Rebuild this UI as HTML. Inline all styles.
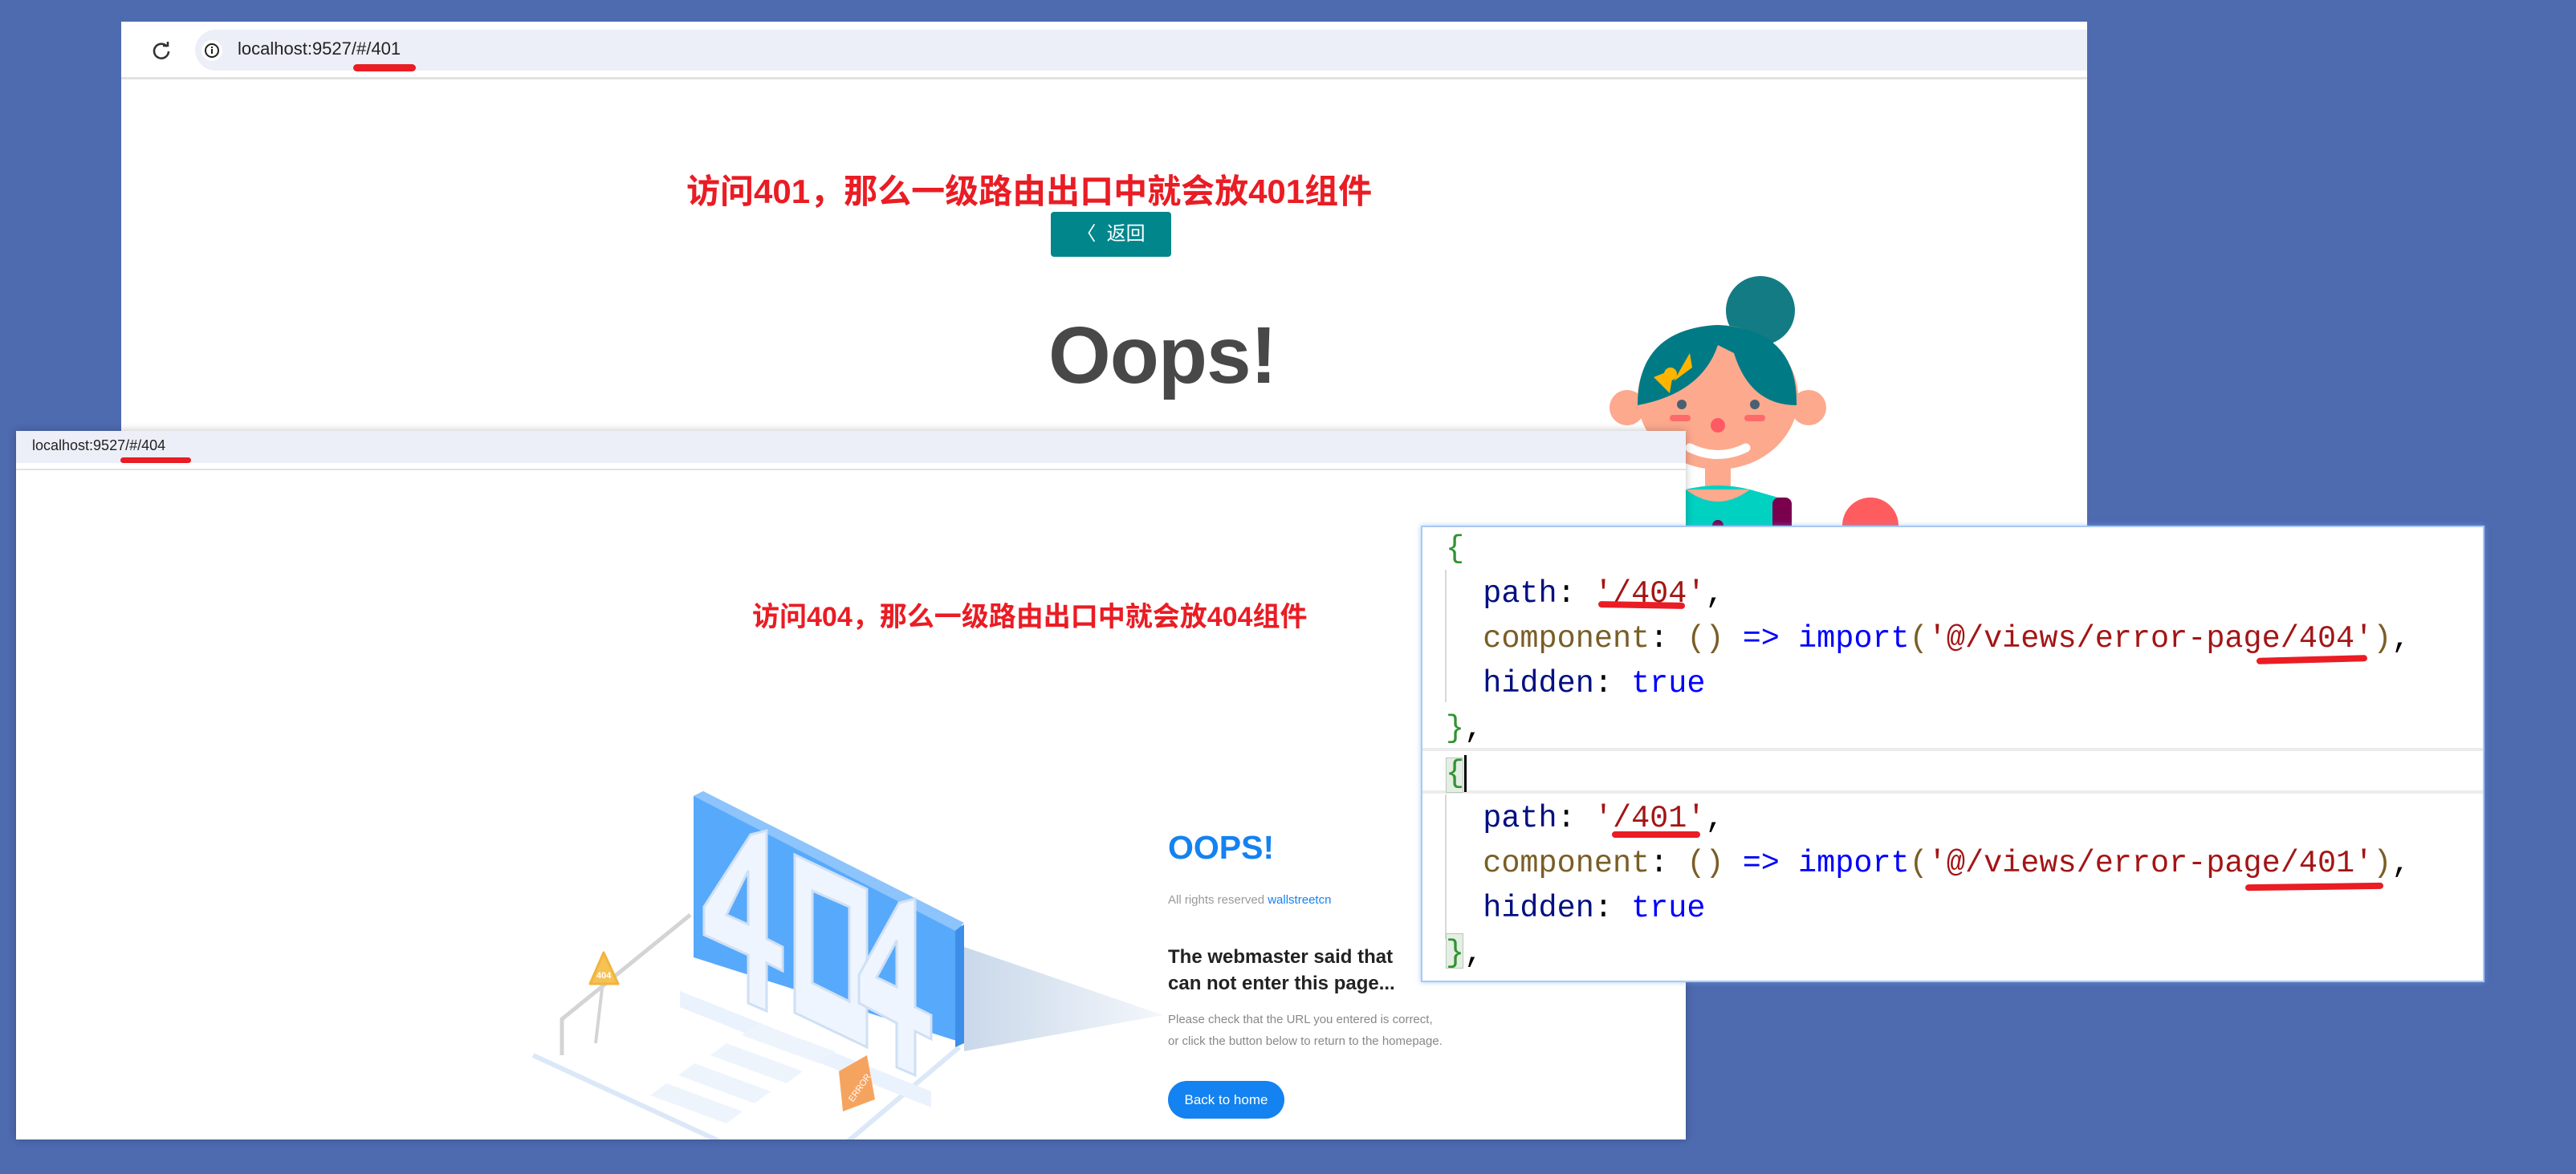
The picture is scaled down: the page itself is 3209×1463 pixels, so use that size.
<!DOCTYPE html>
<html><head><meta charset="utf-8"><style>
*{margin:0;padding:0;box-sizing:border-box}
body{width:3209px;height:1463px;background:#4e6bb0;position:relative;overflow:hidden;font-family:"Liberation Sans","Noto Sans CJK SC",sans-serif}
.abs{position:absolute}
.cn{font-family:"Liberation Sans","Noto Sans CJK SC",sans-serif;font-weight:bold;color:#ea1c24;white-space:nowrap}
.code{font-family:"Liberation Mono",monospace;font-size:38.5px;white-space:pre;line-height:56px}
</style></head><body>

<!-- window 1 -->
<div class="abs" style="left:151px;top:27px;width:2449px;height:640px;background:#fff"></div>
<div class="abs" style="left:243px;top:37px;width:2357px;height:51px;background:#eceff7;border-radius:26px 0 0 26px"></div>
<div class="abs" style="left:151px;top:96px;width:2449px;height:3px;background:#e2e2e2"></div>
<svg class="abs" style="left:188px;top:50px" width="26" height="26" viewBox="0 0 26 26"><path d="M20 8 A9 9 0 1 0 22 14" fill="none" stroke="#333" stroke-width="2.6"/><path d="M15 7 L21 7 L21 2" fill="none" stroke="#333" stroke-width="2.6"/></svg>
<div class="abs" style="left:251px;top:50px;width:26px;height:26px;border-radius:50%;background:#fff"></div>
<svg class="abs" style="left:254px;top:53px" width="20" height="20" viewBox="0 0 20 20"><circle cx="10" cy="10" r="8" fill="none" stroke="#222" stroke-width="2"/><rect x="9" y="8" width="2" height="6" fill="#222"/><rect x="9" y="5" width="2" height="2" fill="#222"/></svg>
<div class="abs" style="left:296px;top:48px;font-size:22px;color:#222">localhost:9527/#/401</div>
<div class="abs" style="left:440px;top:80px;width:78px;height:9px;background:#ea1c24;border-radius:5px"></div>

<div class="abs cn" style="left:855px;top:205px;font-size:42px">访问401，那么一级路由出口中就会放401组件</div>
<div class="abs" style="left:1309px;top:264px;width:150px;height:56px;background:#00868b;border-radius:4px;color:#fff;font-size:24px;line-height:56px;text-align:center">〈&nbsp;&nbsp;返回</div>
<div class="abs" style="left:1306px;top:386px;font-size:100px;font-weight:bold;color:#484848;letter-spacing:-1px">Oops!</div>

<!-- girl -->
<svg class="abs" style="left:2000px;top:340px" width="400" height="330" viewBox="2000 340 400 330">
<circle cx="2193" cy="387" r="43" fill="#137b84"/>
<circle cx="2027" cy="508" r="22" fill="#fca98e"/><circle cx="2253" cy="508" r="22" fill="#fca98e"/>
<rect x="2124" y="565" width="32" height="45" fill="#fca98e"/>
<path d="M2100 610 Q2140 600 2180 610 L2215 620 L2215 670 L2100 670Z" fill="#00d1c1"/>
<path d="M2100 610 Q2140 640 2180 610Z" fill="#fca98e"/>
<rect x="2208" y="620" width="24" height="50" rx="8" fill="#7a004e"/>
<circle cx="2140" cy="655" r="7" fill="#7a004e"/>
<ellipse cx="2140" cy="495" rx="100" ry="90" fill="#fca98e"/>
<path d="M2040 505 Q2040 410 2140 405 Q2240 410 2238 505 Q2180 505 2160 440 L2140 430 Q2120 490 2040 505Z" fill="#007a85"/>
<path d="M2060 470 L2080 490 L2085 460 Z M2085 475 L2105 440 L2108 458Z" fill="#ffb400"/><circle cx="2081" cy="466" r="8" fill="#ffb400"/>
<circle cx="2095" cy="504" r="6" fill="#4a6070"/><circle cx="2186" cy="504" r="6" fill="#4a6070"/>
<rect x="2080" y="517" width="26" height="8" rx="4" fill="#fc6a6a"/><rect x="2173" y="517" width="26" height="8" rx="4" fill="#fc6a6a"/>
<circle cx="2140" cy="530" r="9" fill="#ff5a64"/>
<path d="M2105 558 Q2140 575 2175 558" fill="none" stroke="#fff" stroke-width="11" stroke-linecap="round"/>
<circle cx="2330" cy="655" r="35" fill="#ff5c60"/>
</svg>

<!-- window 2 -->
<div class="abs" style="left:20px;top:537px;width:2080px;height:883px;background:#fff;box-shadow:0 0 10px rgba(0,0,0,.25)"></div>
<div class="abs" style="left:20px;top:537px;width:2080px;height:40px;background:#eceff7"></div>
<div class="abs" style="left:20px;top:584px;width:2080px;height:2px;background:#e2e2e2"></div>
<div class="abs" style="left:40px;top:545px;font-size:18px;color:#222">localhost:9527/#/404</div>
<div class="abs" style="left:150px;top:570px;width:88px;height:7px;background:#ea1c24;border-radius:4px"></div>
<div class="abs cn" style="left:937px;top:741px;font-size:34px">访问404，那么一级路由出口中就会放404组件</div>

<svg class="abs" style="left:660px;top:985px" width="800" height="435" viewBox="660 985 800 435">
<defs><linearGradient id="sh" x1="0" x2="1"><stop offset="0" stop-color="#c9d8ea"/><stop offset="1" stop-color="#f4f7fb"/></linearGradient></defs>
<path d="M1201 1180 L1449 1265 L1201 1310Z" fill="url(#sh)"/>
<path d="M664 1315 L1000 1470 L1195 1305" fill="none" stroke="#dbe8f8" stroke-width="6"/>
<path d="M700 1315 L700 1270 L860 1140" fill="none" stroke="#d4d4d4" stroke-width="5"/>
<path d="M742 1300 L752 1215" fill="none" stroke="#d4d4d4" stroke-width="4"/>
<path d="M847 1235 L1160 1360 L1160 1380 L847 1255Z" fill="#eaf2fd"/>
<path d="M944 1275 L1040 1310 L1020 1325 L924 1290Z M905 1300 L1000 1335 L980 1350 L885 1315Z M865 1325 L960 1360 L940 1375 L845 1340Z M830 1350 L925 1385 L905 1400 L810 1365Z" fill="#eef4fc"/>
<path d="M864 992 L876 986 L1201 1155 L1201 1300 L864 1193Z" fill="#57a9fb"/>
<path d="M864 992 L876 986 L1201 1150 L1190 1160Z" fill="#8cc4fb"/>
<path d="M1190 1160 L1201 1152 L1201 1300 L1190 1305Z" fill="#3d8ee8"/>
<g fill="#eef5fe" stroke="#cfe0f5" stroke-width="3">
<path d="M935 1040 L955 1035 L955 1170 L975 1180 L975 1210 L955 1200 L955 1260 L932 1250 L932 1190 L877 1165 L877 1130Z M932 1085 L905 1140 L932 1152Z"/>
<path d="M990 1065 L1080 1108 L1080 1305 L990 1262Z M1012 1110 L1012 1225 L1058 1248 L1058 1130Z" fill-rule="evenodd"/>
<path d="M1120 1125 L1140 1120 L1140 1255 L1160 1265 L1160 1295 L1140 1285 L1140 1340 L1117 1330 L1117 1275 L1070 1250 L1070 1215Z M1117 1172 L1092 1218 L1117 1230Z"/>
</g>
<path d="M752 1187 L735 1226 L770 1226Z" fill="#f6c254" stroke="#f0b440" stroke-width="3" stroke-linejoin="round"/>
<text x="743" y="1219" font-size="11" fill="#fff" font-family="Liberation Sans" font-weight="bold">404</text>
<path d="M1045 1335 L1080 1315 L1090 1370 L1050 1385Z" fill="#f5a460"/>
<text x="1050" y="1370" font-size="11" fill="#fff" font-family="Liberation Sans" transform="rotate(-55 1060 1360)">ERROR</text>
</svg>

<div class="abs" style="left:1455px;top:1033px;font-size:41px;font-weight:bold;color:#1482f0">OOPS!</div>
<div class="abs" style="left:1455px;top:1113px;font-size:15px;color:#999">All rights reserved <span style="color:#1482f0">wallstreetcn</span></div>
<div class="abs" style="left:1455px;top:1176px;font-size:24px;font-weight:bold;color:#222;line-height:33px;white-space:nowrap">The webmaster said that<br>can not enter this page...</div>
<div class="abs" style="left:1455px;top:1257px;font-size:15px;color:#888;line-height:27px;white-space:nowrap">Please check that the URL you entered is correct,<br>or click the button below to return to the homepage.</div>
<div class="abs" style="left:1455px;top:1347px;width:145px;height:47px;border-radius:24px;background:#1482f0;color:#fff;font-size:17px;line-height:47px;text-align:center">Back to home</div>

<!-- code panel -->
<div class="abs" style="left:1770px;top:655px;width:1325px;height:569px;background:#fff;border:2px solid #a9c9f4;box-shadow:0 0 6px rgba(120,170,240,.6)"></div>
<div class="abs" style="left:1772px;top:932px;width:1321px;height:4px;background:#ececec"></div>
<div class="abs" style="left:1772px;top:985px;width:1321px;height:4px;background:#ececec"></div>
<div class="abs" style="left:1800px;top:710px;width:2px;height:165px;background:#d8d8d8"></div>
<div class="abs" style="left:1800px;top:990px;width:2px;height:180px;background:#d8d8d8"></div>
<div class="abs" style="left:1801px;top:944px;width:22px;height:44px;background:#e4eee4;border:1px solid #b8c8b8"></div>
<div class="abs" style="left:1801px;top:1163px;width:22px;height:44px;background:#e4eee4;border:1px solid #b8c8b8"></div>
<div class="abs" style="left:1824px;top:941px;width:3px;height:46px;background:#000"></div>
<div class="abs code" style="left:1801px;top:656px;color:#000"><span style="color:#319331">{</span>
  <span style="color:#001080">path</span>: <span style="color:#a31515">'/404'</span>,
  <span style="color:#795e26">component</span>: <span style="color:#795e26">()</span> <span style="color:#0000ff">=&gt;</span> <span style="color:#0000ff">import</span><span style="color:#795e26">(</span><span style="color:#a31515">'@/views/error-page/404'</span><span style="color:#795e26">)</span>,
  <span style="color:#001080">hidden</span>: <span style="color:#0000ff">true</span>
<span style="color:#319331">}</span>,
<span style="color:#319331">{</span>
  <span style="color:#001080">path</span>: <span style="color:#a31515">'/401'</span>,
  <span style="color:#795e26">component</span>: <span style="color:#795e26">()</span> <span style="color:#0000ff">=&gt;</span> <span style="color:#0000ff">import</span><span style="color:#795e26">(</span><span style="color:#a31515">'@/views/error-page/401'</span><span style="color:#795e26">)</span>,
  <span style="color:#001080">hidden</span>: <span style="color:#0000ff">true</span>
<span style="color:#319331">}</span>,</div>
<div class="abs" style="left:1991px;top:750px;width:108px;height:8px;background:#ea1c24;border-radius:4px;transform:rotate(1deg)"></div>
<div class="abs" style="left:2811px;top:818px;width:138px;height:8px;background:#ea1c24;border-radius:4px;transform:rotate(-1.5deg)"></div>
<div class="abs" style="left:2008px;top:1036px;width:110px;height:8px;background:#ea1c24;border-radius:4px"></div>
<div class="abs" style="left:2797px;top:1101px;width:172px;height:8px;background:#ea1c24;border-radius:4px;transform:rotate(-.8deg)"></div>
</body></html>
